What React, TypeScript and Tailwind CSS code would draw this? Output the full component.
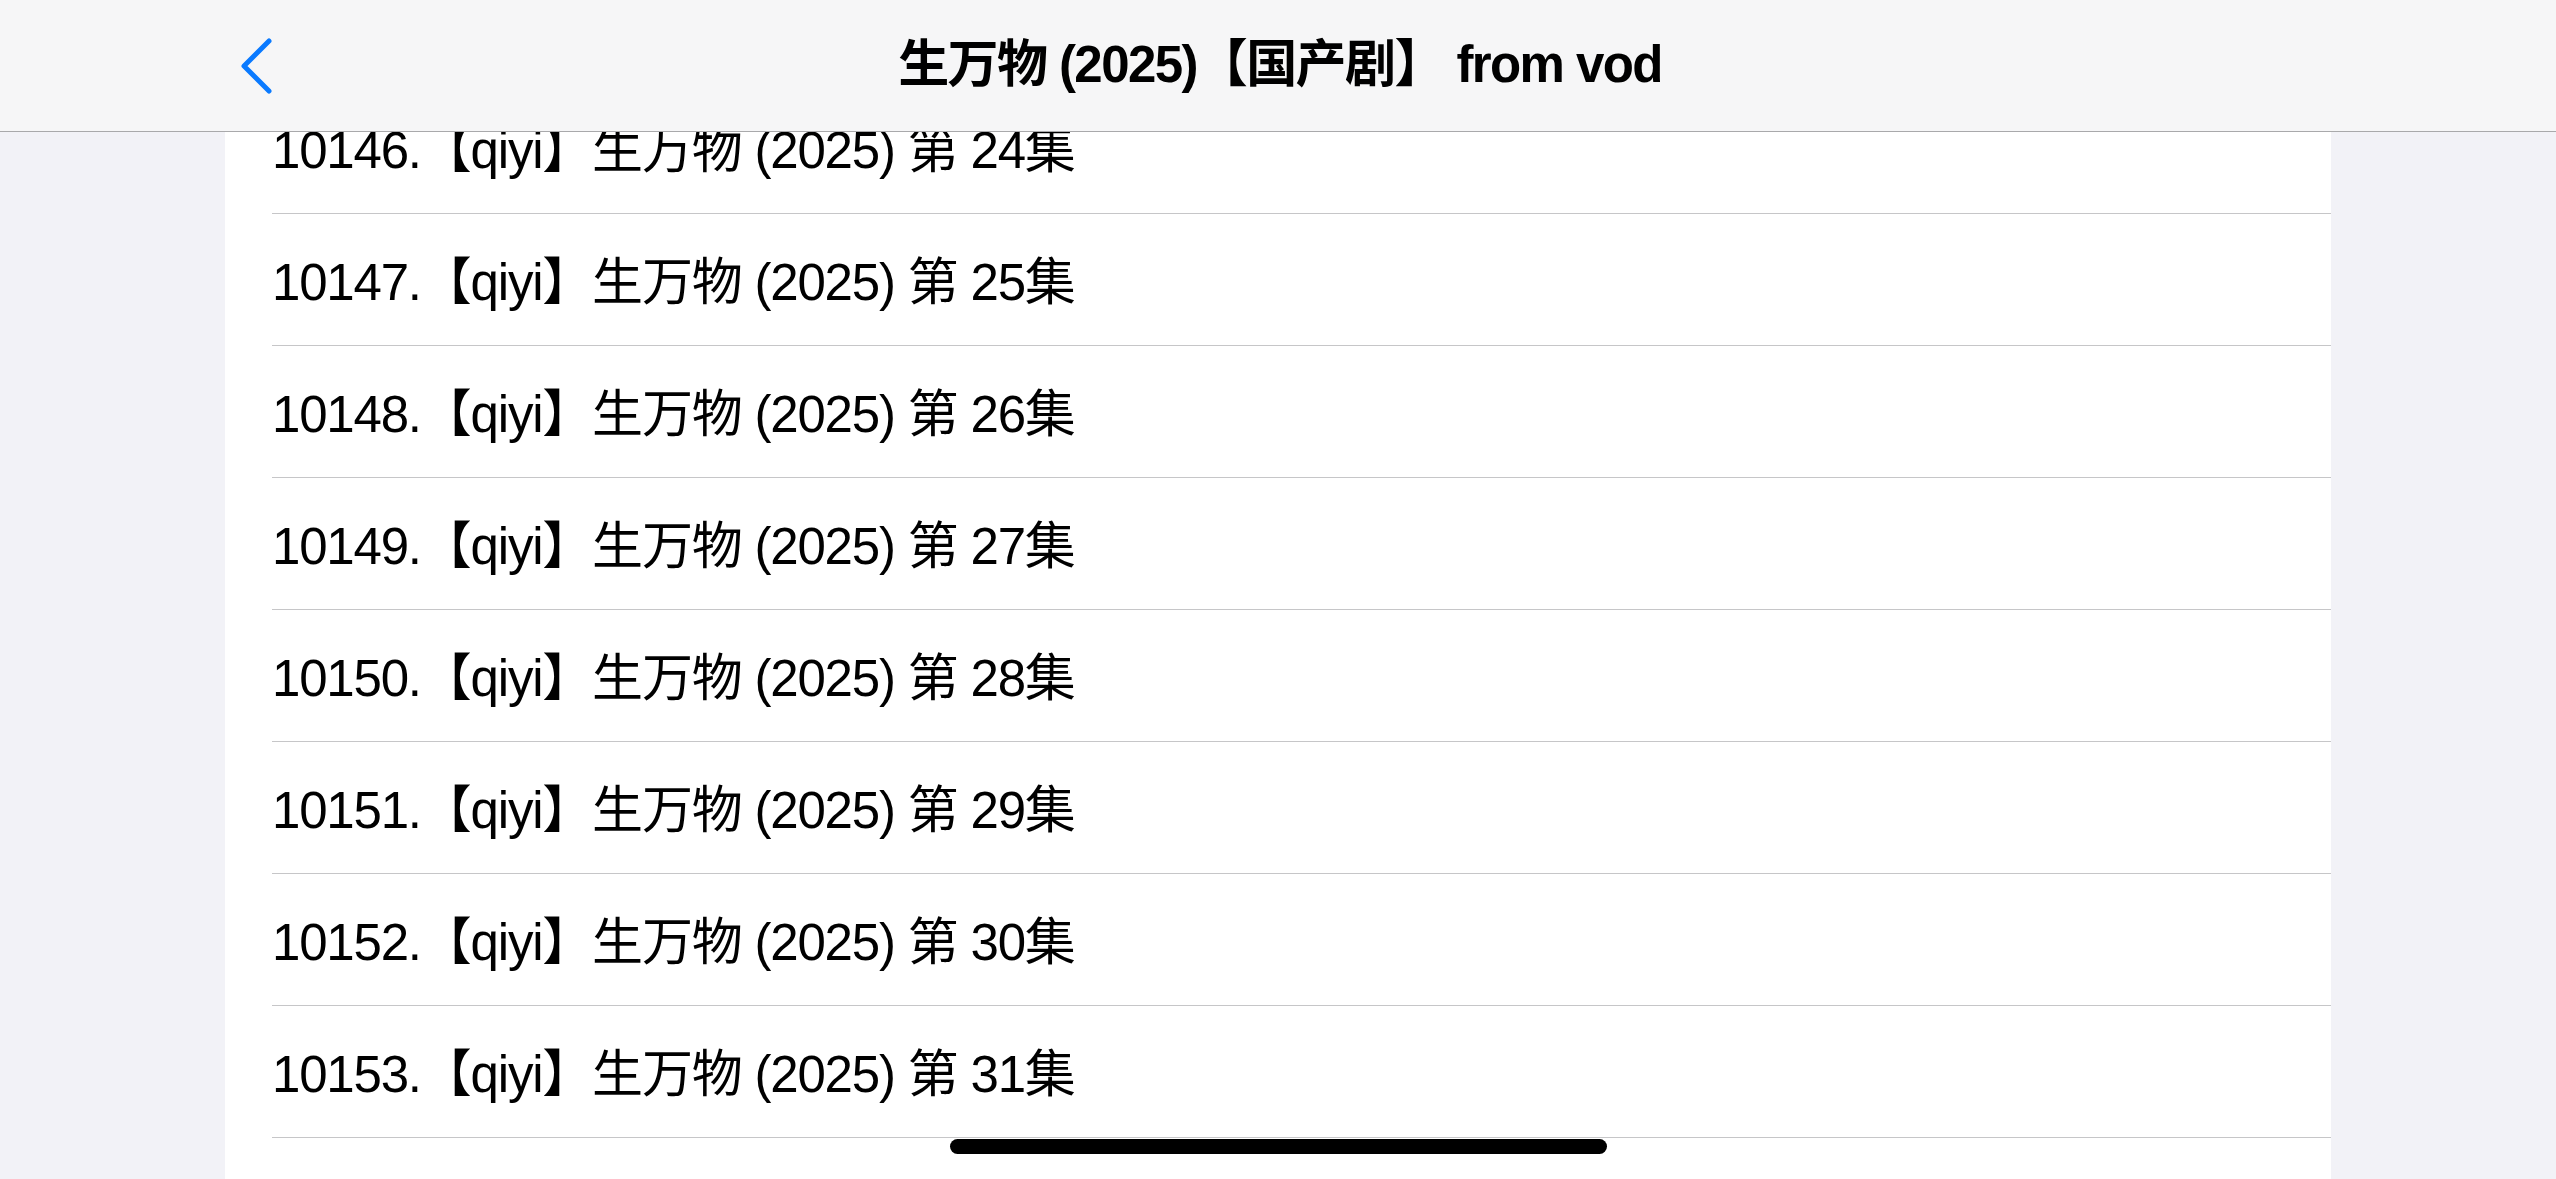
import React from 'react';

const EPISODES = Array.from({ length: 10 }, (_, i) => ({ id: 10145 + i, ep: 23 + i }));

function BackChevron() {
  return (
    <svg width="36" height="58" viewBox="0 0 36 58" fill="none">
      <polyline points="31,4 6,29 31,54" stroke="#0a7aff" strokeWidth="5" strokeLinecap="round" strokeLinejoin="round" />
    </svg>
  );
}

export default function App() {
  return (
    <div
      className="relative w-[2556px] h-[1179px] overflow-hidden bg-[#f2f2f7] text-black"
      style={{ fontFamily: '"Liberation Sans", "Noto Sans CJK SC", sans-serif' }}
    >
      <header className="absolute top-0 inset-x-0 z-10 h-[132px] bg-[#f6f6f7] border-b border-[#a9a9ab] flex items-center justify-center">
        <button className="absolute left-[238px] top-[37px]">
          <BackChevron />
        </button>
        <h1 className="text-[51px] font-semibold tracking-[-1.6px] pl-[4px]">生万物 (2025)【国产剧】 from vod</h1>
      </header>

      {/* Episode list */}
      <div className="mx-[225px] mt-[-50px] bg-white">
        {EPISODES.map((e) => (
          <div key={e.id} className="h-[132px] pl-[47px]">
            <div className="h-full flex items-center border-b border-[#c6c6c8] text-[51px] tracking-[-1.2px] pt-[8px]">
              {e.id}.【qiyi】生万物 (2025) 第 {e.ep}集
            </div>
          </div>
        ))}
      </div>

      {/* Home indicator */}
      <div className="absolute left-[950px] bottom-[25px] w-[657px] h-[15px] rounded-full bg-black" />
    </div>
  );
}
